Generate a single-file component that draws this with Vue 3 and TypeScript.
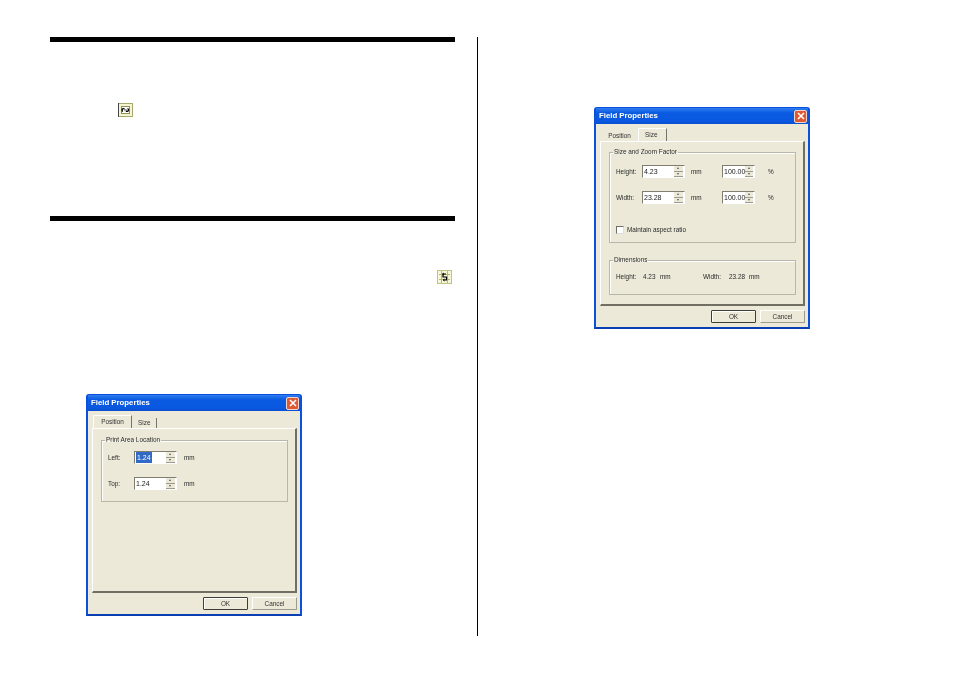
<script setup lang="ts">
interface SpinRow {
  label: string
  value: string
  selected?: boolean
  percent?: string
}

const positionRows: SpinRow[] = [
  { label: 'Left:', value: '1.24', selected: true },
  { label: 'Top:', value: '1.24' },
]

const sizeRows: SpinRow[] = [
  { label: 'Height:', value: '4.23', percent: '100.00' },
  { label: 'Width:', value: '23.28', percent: '100.00' },
]
</script>

<template>
  <div class="page">
    <div class="col-left">
      <div class="rule" />
      <svg class="tool-icon icon-one" width="15" height="14" viewBox="0 0 15 14">
        <rect x="0.5" y="0.5" width="14" height="13" fill="#f4f4cf" stroke="#a8a870" />
        <path d="M0.5 0v14" stroke="#444" />
        <rect x="3.500" y="3.500" width="8" height="7" fill="#fff" stroke="#8f8f55" />
        <path d="M5 8.500a1.500 1.500 0 1 1 1.500-2.500M9.500 5.500a1.500 1.500 0 1 1-1.500 2.500" fill="none" stroke="#000" stroke-width="1.300" />
        <path d="M6 7h3" stroke="#222" stroke-width="0.8" />
      </svg>
      <div class="rule rule-second" />
      <svg class="tool-icon icon-two" width="15" height="14" viewBox="0 0 15 14">
        <rect x="0.5" y="0.5" width="14" height="13" fill="#f6f6d8" stroke="#c2c284" />
        <path d="M2 4.500h11M2 9.500h11M4.500 1v12M10.500 1v12" stroke="#b8b86c" />
        <path d="M9 4H6v3h3.500v3H6.500" fill="none" stroke="#000" stroke-width="1.200" />
        <path d="M7 3l-1.500 1L7 5M7.500 9l-1.500 1 1.500 1" fill="none" stroke="#000" stroke-width="0.8" />
      </svg>

      <div class="dialog dialog-position">
        <div class="titlebar">
          <span>Field Properties</span>
          <button class="close-btn">
            <svg width="8" height="8" viewBox="0 0 8 8"><path d="M1 1l6 6M7 1L1 7" stroke="#fff" stroke-width="1.600" /></svg>
          </button>
        </div>
        <div class="dialog-body">
          <div class="tabs">
            <div class="tab active">Position</div>
            <div class="tab">Size</div>
          </div>
          <div class="panel">
            <fieldset class="group">
              <legend>Print Area Location</legend>
              <div class="spin-list">
                <div v-for="row in positionRows" :key="row.label" class="spin-row">
                  <span class="row-label">{{ row.label }}</span>
                  <div class="spin">
                    <span class="spin-value"><span :class="{ selected: row.selected }">{{ row.value }}</span></span>
                    <span class="spin-btns"><i class="up" /><i class="down" /></span>
                  </div>
                  <span class="unit">mm</span>
                </div>
              </div>
            </fieldset>
          </div>
          <div class="actions">
            <button class="btn default">OK</button>
            <button class="btn">Cancel</button>
          </div>
        </div>
      </div>
    </div>

    <div class="divider" />

    <div class="col-right">
      <div class="dialog dialog-size">
        <div class="titlebar">
          <span>Field Properties</span>
          <button class="close-btn">
            <svg width="8" height="8" viewBox="0 0 8 8"><path d="M1 1l6 6M7 1L1 7" stroke="#fff" stroke-width="1.600" /></svg>
          </button>
        </div>
        <div class="dialog-body">
          <div class="tabs tabs-size">
            <div class="tab">Position</div>
            <div class="tab active">Size</div>
          </div>
          <div class="panel">
            <fieldset class="group">
              <legend>Size and Zoom Factor</legend>
              <div class="spin-list">
                <div v-for="row in sizeRows" :key="row.label" class="spin-row">
                  <span class="row-label">{{ row.label }}</span>
                  <div class="spin">
                    <span class="spin-value">{{ row.value }}</span>
                    <span class="spin-btns"><i class="up" /><i class="down" /></span>
                  </div>
                  <span class="unit unit-wide">mm</span>
                  <div class="spin spin-small">
                    <span class="spin-value">{{ row.percent }}</span>
                    <span class="spin-btns"><i class="up" /><i class="down" /></span>
                  </div>
                  <span class="unit unit-percent">%</span>
                </div>
              </div>
              <label class="check-row">
                <span class="check" />
                <span>Maintain aspect ratio</span>
              </label>
            </fieldset>
            <fieldset class="group group-dimensions">
              <legend>Dimensions</legend>
              <div class="dim-row">
                <span>Height:</span><span>4.23</span><span>mm</span>
                <span>Width:</span><span>23.28</span><span>mm</span>
              </div>
            </fieldset>
          </div>
          <div class="actions">
            <button class="btn default">OK</button>
            <button class="btn">Cancel</button>
          </div>
        </div>
      </div>
    </div>
  </div>
</template>

<style>
body {
  background: #fff;
}
</style>

<style scoped>
.page {
  display: flex;
  align-items: flex-start;
  width: 954px;
  height: 673px;
  padding-top: 37px;
  box-sizing: border-box;
  overflow: hidden;
  background: #fff;
}

.col-left {
  display: flex;
  flex-direction: column;
  width: 405px;
  margin-left: 50px;
}

.rule {
  height: 5px;
  background: #000;
}

.rule-second {
  margin-top: 99px;
}

.tool-icon {
  display: block;
  flex: none;
}

.icon-one {
  margin: 61px 0 0 68px;
}

.icon-two {
  margin: 49px 0 0 387px;
}

.divider {
  flex: none;
  width: 1px;
  height: 599px;
  margin-left: 22px;
  background: #000;
}

.col-right {
  padding: 70px 0 0 116px;
}

.dialog {
  display: flex;
  flex-direction: column;
  width: 216px;
  height: 222px;
  box-sizing: border-box;
  border: 2px solid #0b50dc;
  border-top-width: 1px;
  border-bottom-color: #0a3fb4;
  border-radius: 3px 3px 0 0;
  font: 6.400px/8px "Liberation Sans", Arial, sans-serif;
  color: #2a2a2a;
  filter: blur(0.4px);
}

.dialog-position {
  margin: 110px 0 0 36px;
}

.titlebar {
  display: flex;
  align-items: center;
  justify-content: space-between;
  height: 16px;
  padding: 0 1px 0 3px;
  background: linear-gradient(#2f7df0, #0a5ae2 30%, #0a58e0 80%, #0a4fd0);
  font-weight: bold;
  font-size: 7.800px;
  color: #fff;
}

.close-btn {
  display: flex;
  align-items: center;
  justify-content: center;
  width: 13px;
  height: 13px;
  padding: 0;
  border: 1px solid #f3d5c8;
  border-radius: 2px;
  background: #dd5a36;
}

.dialog-body {
  flex: 1;
  padding: 5px 3px 0 4px;
  background: #ece9d8;
}

.tabs {
  display: flex;
  align-items: flex-end;
  height: 12px;
  padding-left: 1px;
}

.tab {
  padding: 0 6px;
  height: 10px;
  line-height: 10px;
  border-right: 1px solid #77756a;
  color: #333;
}

.tab:first-child {
  border-right: 0;
  width: 25px;
  text-align: center;
}

.tab:last-child {
  width: 12px;
}

.tab.active {
  height: 12px;
  line-height: 12px;
  border-top: 1px solid #fff;
  border-left: 1px solid #fff;
  box-sizing: content-box;
  background: #ece9d8;
}

.tabs .tab:first-child.active {
  border-right: 1px solid #77756a;
}

.tabs-size .tab:last-child {
  width: 15px;
}

.panel {
  height: 165px;
  box-sizing: border-box;
  padding: 7px 7px 0 8px;
  border: 1px solid #fff;
  border-right: 2px solid #716f64;
  border-bottom: 2px solid #716f64;
}

.dialog-size .panel {
  padding-top: 6px;
}

.group {
  margin: 0;
  padding: 7px 6px 11px;
  border: 1px solid #b9b7a7;
  box-shadow: inset 1px 1px 0 #fff;
  min-width: 0;
}

.dialog-size .group {
  padding-top: 9px;
  padding-bottom: 8px;
}

.dialog-size .group-dimensions {
  margin-top: 13px;
  padding-top: 9px;
  padding-bottom: 13px;
}

.group legend {
  margin-left: -3px;
  padding: 0 1px;
  line-height: 8px;
}

.spin-list {
  display: flex;
  flex-direction: column;
  gap: 13px;
}

.spin-row {
  display: flex;
  align-items: center;
  height: 13px;
}

.row-label {
  width: 26px;
}

.spin {
  display: flex;
  width: 43px;
  height: 13px;
  box-sizing: border-box;
  border: 1px solid #7f7d72;
  border-right-color: #fff;
  border-bottom-color: #fff;
  background: #fff;
}

.spin-small {
  width: 33px;
}

.spin-value {
  flex: 1;
  padding-left: 1px;
  font-size: 7px;
  line-height: 11px;
  color: #222;
}

.selected {
  display: inline-block;
  padding: 0 1px;
  background: #316ac5;
  color: #fff;
}

.spin-btns {
  display: flex;
  flex-direction: column;
  width: 9px;
  margin: 0 1px 0 0;
}

.spin-btns i {
  position: relative;
  flex: 1;
  background: #ece9d8;
  border-bottom: 1px solid #9c9a8c;
}

.spin-btns i::after {
  content: "";
  position: absolute;
  left: 3px;
  top: 1px;
  border: 1.500px solid transparent;
}

.spin-btns .up::after {
  border-top: 0;
  border-bottom: 2px solid #555;
}

.spin-btns .down::after {
  border-bottom: 0;
  border-top: 2px solid #555;
}

.unit {
  margin-left: 7px;
}

.unit-wide {
  width: 30px;
  margin-left: 6px;
  margin-right: 1px;
}

.unit-percent {
  margin-left: 13px;
}

.check-row {
  display: flex;
  align-items: center;
  gap: 3px;
  height: 9px;
  margin-top: 21px;
}

.check {
  width: 8px;
  height: 8px;
  box-sizing: border-box;
  border: 1px solid #716f64;
  border-right-color: #ddd;
  border-bottom-color: #ddd;
  background: #fff;
}

.dim-row {
  display: grid;
  grid-template-columns: 27px 17px 43px 26px 20px auto;
  height: 8px;
}

.actions {
  display: flex;
  justify-content: flex-end;
  gap: 4px;
  margin-top: 4px;
}

.btn {
  width: 45px;
  height: 13px;
  padding: 0;
  border: 1px solid #9d9b8c;
  border-top-color: #fff;
  border-left-color: #fff;
  border-radius: 1px;
  background: #ece9d8;
  font: inherit;
  color: #333;
}

.btn.default {
  border: 1px solid #3e3d36;
  box-shadow: inset 1px 1px 0 #fff;
}
</style>
